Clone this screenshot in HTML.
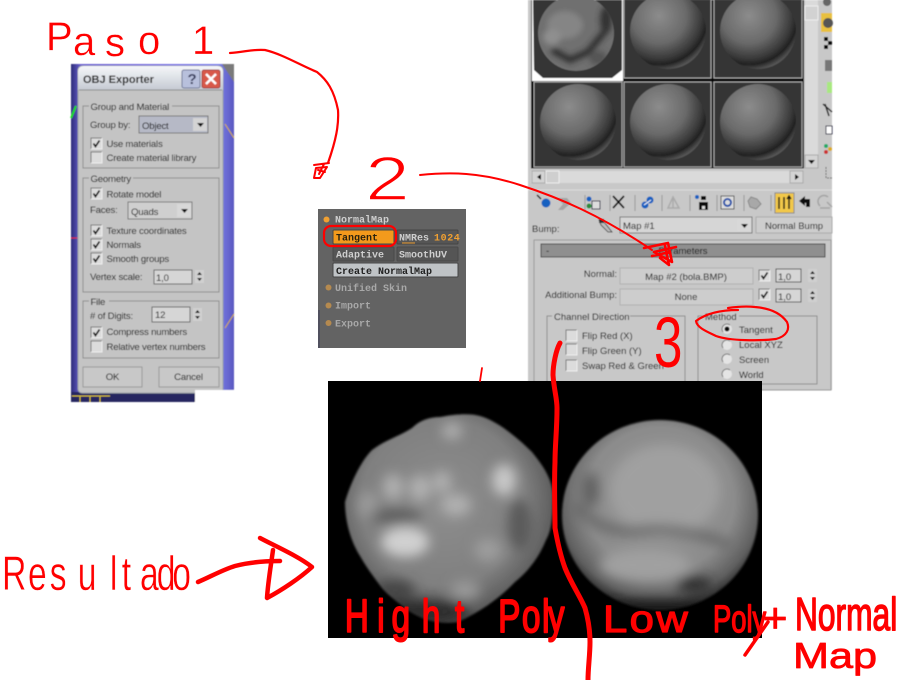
<!DOCTYPE html>
<html><head><meta charset="utf-8"><title>Normal map</title>
<style>
html,body{margin:0;padding:0;background:#fff;width:900px;height:680px;overflow:hidden}
svg{display:block;position:absolute;left:0;top:0}
text{font-family:"Liberation Sans",sans-serif}
.ui text{font-size:9.6px;letter-spacing:-.2px;fill:#000}
.mx text{font-size:9.5px;fill:#000}
.z text{font-family:"Liberation Mono",monospace;font-weight:bold;font-size:10px;fill:#cfcfcf}
.hw{fill:#f00;stroke:#f00;stroke-linejoin:round}
.er{fill:#f00;stroke:#fff;stroke-linejoin:round}
.r{fill:none;stroke:#f00;stroke-linecap:round;stroke-linejoin:round}
</style></head><body>
<svg width="900" height="680" viewBox="0 0 900 680" xmlns="http://www.w3.org/2000/svg">
<defs>
<filter id="b" x="-5%" y="-5%" width="110%" height="110%"><feGaussianBlur stdDeviation="0.4"/></filter>
<filter id="b2" x="-5%" y="-5%" width="110%" height="110%"><feGaussianBlur stdDeviation="0.3"/></filter>
<filter id="bl8" x="-50%" y="-50%" width="200%" height="200%"><feGaussianBlur stdDeviation="6"/></filter>
<filter id="bl4" x="-50%" y="-50%" width="200%" height="200%"><feGaussianBlur stdDeviation="3"/></filter>
<filter id="bl1" x="-10%" y="-10%" width="120%" height="120%"><feGaussianBlur stdDeviation="1"/></filter>
<radialGradient id="s" cx=".38" cy=".3" r=".8"><stop offset="0" stop-color="#8c8c8c"/><stop offset=".45" stop-color="#6a6a6a"/><stop offset=".7" stop-color="#3a3a3a"/><stop offset=".8" stop-color="#222"/><stop offset=".9" stop-color="#555"/><stop offset="1" stop-color="#777"/></radialGradient>
<radialGradient id="ls" cx=".47" cy=".42" r=".62"><stop offset="0" stop-color="#8e8e8e"/><stop offset=".6" stop-color="#808080"/><stop offset=".82" stop-color="#5c5c5c"/><stop offset="1" stop-color="#1c1c1c"/></radialGradient>
<radialGradient id="rs" cx=".5" cy=".42" r=".6"><stop offset="0" stop-color="#979797"/><stop offset=".62" stop-color="#8c8c8c"/><stop offset=".84" stop-color="#606060"/><stop offset="1" stop-color="#111"/></radialGradient>
<linearGradient id="tb" x1="0" x2="0" y1="0" y2="1"><stop offset="0" stop-color="#f6f7fa"/><stop offset="1" stop-color="#c5cad2"/></linearGradient>
<linearGradient id="pg" x1="0" x2="1" y1="0" y2="0"><stop offset="0" stop-color="#2c2c78"/><stop offset=".06" stop-color="#6a5fd0"/><stop offset=".5" stop-color="#7a70e0"/><stop offset=".9" stop-color="#7c80ea"/><stop offset="1" stop-color="#5a58c0"/></linearGradient>
<g id="cb"><rect width="11" height="11" fill="#dcdcdc"/><path d="M0 11V0H11" fill="none" stroke="#777"/><path d="M11 0V11H0" fill="none" stroke="#eee"/></g>
<g id="ck"><use href="#cb"/><path d="M2.5 5.5L4.5 8.5L8.5 2.5" fill="none" stroke="#111" stroke-width="1.7"/></g>
<g id="sp"><rect width="9" height="13" fill="#d0d0d0"/><path d="M4.5 2L7 5H2ZM4.5 11L7 8H2Z" fill="#111"/></g>
<g id="ra"><circle r="5" fill="#e4e4e4"/><path d="M-4 3A5 5 0 0 1 3 -4" fill="none" stroke="#777"/></g>
<clipPath id="lc"><path d="M345 502C350 485 360 462 372 450C385 440 400 436 412 428C420 420 430 417 440 417C455 414 470 413 480 416C495 420 515 435 532 452C545 468 552 480 553 495C553 515 552 530 546 540C540 555 530 570 515 582C500 598 480 612 458 622C440 625 420 620 405 608C395 600 388 595 382 588C372 575 365 565 360 556C350 540 345 520 345 502Z"/></clipPath>
<clipPath id="rc"><ellipse cx="660" cy="515" rx="98" ry="95"/></clipPath>
<clipPath id="c1"><circle cx="576" cy="33" r="38"/></clipPath>
</defs>

<!-- OBJ exporter -->
<g class="ui" filter="url(#b)">
<rect x="71" y="64" width="163" height="338" fill="url(#pg)"/>
<rect x="71" y="392" width="124" height="10" fill="#262660"/>
<path d="M222 64H234V82Z" fill="#7a7a7a"/>
<path d="M71 118L76 106" stroke="#1fe01f" stroke-width="2" fill="none"/>
<path d="M225 124L234 138M225 328L234 314" stroke="#d8b030" fill="none"/>
<path d="M71 238H78" stroke="#e02020"/>
<path d="M72 396H110M90 396V402M80 396V402M100 396V402" stroke="#d8c020" fill="none"/>
<rect x="78" y="66" width="145" height="327" rx="4" fill="#c4c4c4" stroke="#9aa0a8"/>
<rect x="195" y="390" width="40" height="13" fill="#fff"/>
<path d="M78 90V72Q78 66 84 66H217Q223 66 223 72V90Z" fill="url(#tb)"/>
<path d="M79 90H222" stroke="#8a8a8a"/>
<text x="83" y="83" style="font-weight:bold;font-size:11px;letter-spacing:0;fill:#222">OBJ Exporter</text>
<rect x="182" y="70" width="18" height="18" rx="2" fill="#b8c0dc" stroke="#707898"/>
<text x="187.5" y="84" style="font-size:15px;font-weight:bold;fill:#3a3f60">?</text>
<rect x="202" y="70" width="18" height="18" rx="2" fill="#d85848" stroke="#a04040"/>
<path d="M206 74L216 84M216 74L206 84" stroke="#fff" stroke-width="2.4"/>
<g fill="none" stroke="#8e8e8e"><rect x="83" y="106" width="136" height="62"/><rect x="83" y="178" width="136" height="114"/><rect x="83" y="301" width="136" height="57"/></g>
<rect x="89" y="100" width="83" height="12" fill="#c4c4c4"/><rect x="89" y="172" width="44" height="12" fill="#c4c4c4"/><rect x="89" y="295" width="20" height="12" fill="#c4c4c4"/>
<text x="90.5" y="110">Group and Material</text>
<text x="90" y="128">Group by:</text>
<rect x="139" y="116" width="69" height="17" fill="#b6b9c6" stroke="#777"/><rect x="193" y="118" width="14" height="13" fill="#d4d4d4"/><path d="M197 123H204L200.500 127Z" fill="#111"/>
<text x="142" y="129">Object</text>
<use href="#ck" x="91" y="138"/><text x="106.500" y="147">Use materials</text>
<use href="#cb" x="91" y="152"/><text x="106.500" y="161">Create material library</text>
<text x="90.500" y="182">Geometry</text>
<use href="#ck" x="91" y="188"/><text x="106.500" y="197.500">Rotate model</text>
<text x="90" y="213">Faces:</text>
<rect x="128" y="202" width="64" height="17" fill="#cfcfcf" stroke="#777"/><rect x="177" y="204" width="14" height="13" fill="#d8d8d8"/><path d="M181 209H188L184.500 213Z" fill="#111"/>
<text x="131" y="215">Quads</text>
<use href="#ck" x="91" y="225"/><text x="106.500" y="234">Texture coordinates</text>
<use href="#ck" x="91" y="239"/><text x="106.500" y="248">Normals</text>
<use href="#ck" x="91" y="253"/><text x="106.500" y="262">Smooth groups</text>
<text x="90" y="280">Vertex scale:</text>
<rect x="154" y="270" width="38" height="14" fill="#d6d6d6" stroke="#666"/><text x="156" y="281">1,0</text><use href="#sp" x="195" y="270"/>
<text x="90.500" y="305">File</text>
<text x="90" y="319"># of Digits:</text>
<rect x="152" y="307" width="38" height="15" fill="#d6d6d6" stroke="#666"/><text x="155" y="318">12</text><use href="#sp" x="193" y="308"/>
<use href="#ck" x="91" y="327"/><text x="106.500" y="335">Compress numbers</text>
<use href="#cb" x="91" y="341"/><text x="106.500" y="350">Relative vertex numbers</text>
<rect x="83" y="367" width="59" height="20" fill="#c8c8c8" stroke="#999"/><rect x="159" y="367" width="60" height="20" fill="#c8c8c8" stroke="#999"/>
<text x="112.500" y="380" text-anchor="middle">OK</text><text x="188.500" y="380" text-anchor="middle">Cancel</text>
</g>

<!-- ZBrush -->
<g class="z" filter="url(#b2)">
<rect x="318" y="209" width="148" height="139" fill="#636363"/>
<path d="M319 310V348" stroke="#3c3c58"/>
<circle cx="326.500" cy="219.500" r="3" fill="#f0a030"/><text x="335" y="222.500">NormalMap</text>
<rect x="333" y="230" width="61" height="14" rx="1" fill="#f39a1c" stroke="#444"/><text x="336" y="240.500" style="fill:#2b2410">Tangent</text>
<rect x="397" y="230" width="61" height="14" rx="1" fill="#555" stroke="#444"/><text x="399" y="240.500">NMRes</text><text x="434" y="240.500" style="fill:#f0a030;letter-spacing:.6px">1024</text>
<path d="M402 243H415" stroke="#f0a030"/>
<rect x="333" y="247" width="61" height="14" rx="1" fill="#555" stroke="#484848"/><text x="336" y="257.500">Adaptive</text>
<rect x="397" y="247" width="61" height="14" rx="1" fill="#555" stroke="#484848"/><text x="399" y="257.500">SmoothUV</text>
<rect x="333" y="263" width="125" height="14" rx="1" fill="#bfc3c6" stroke="#444"/><text x="336" y="274" style="fill:#222">Create NormalMap</text>
<circle cx="328.500" cy="287.500" r="3" fill="#b58a50"/><text x="335" y="291" style="fill:#a8a8a8">Unified Skin</text>
<circle cx="328.500" cy="305.500" r="3" fill="#b58a50"/><text x="335" y="308.500" style="fill:#a8a8a8">Import</text>
<circle cx="328.500" cy="323" r="3" fill="#b58a50"/><text x="335" y="326.500" style="fill:#a8a8a8">Export</text>
</g>

<!-- 3ds Max material editor -->
<g class="mx" filter="url(#b)">
<rect x="528" y="0" width="304" height="390" fill="#c8c8c8"/>
<rect x="531" y="0" width="273" height="168.500" fill="#000"/>
<rect x="532" y="0" width="91" height="81" fill="#fff"/>
<path d="M533 0H622V70L612 78H543L534 70Z" fill="#343434"/>
<g fill="#343434" stroke="#aaa"><rect x="624" y="-1" width="87" height="79"/><rect x="714" y="-1" width="88" height="79"/><rect x="534" y="82" width="88" height="85"/><rect x="624" y="82" width="87" height="85"/><rect x="714" y="82" width="88" height="85"/></g>
<circle cx="576" cy="33" r="38" fill="#6f6f6f"/>
<g clip-path="url(#c1)"><g filter="url(#bl4)">
<ellipse cx="565" cy="25" rx="18" ry="14" fill="#858585"/><ellipse cx="552" cy="37" rx="9" ry="8" fill="#8f8f8f"/>
<path d="M552 50L570 60L588 52L606 30" stroke="#2c2c2c" stroke-width="6" fill="none"/><ellipse cx="606" cy="20" rx="6" ry="14" fill="#333"/><ellipse cx="598" cy="58" rx="9" ry="7" fill="#555"/></g></g>
<circle cx="668" cy="31" r="38" fill="url(#s)"/>
<circle cx="758" cy="31" r="38" fill="url(#s)"/>
<circle cx="578" cy="122" r="38" fill="url(#s)"/>
<circle cx="668" cy="122" r="38" fill="url(#s)"/>
<circle cx="758" cy="122" r="38" fill="url(#s)"/>
<rect x="805" y="0" width="13" height="168" fill="#dadada"/><rect x="805" y="6" width="13" height="14" fill="#d2d2d2" stroke="#eee"/>
<rect x="805" y="155" width="13" height="13" fill="#d4d4d4" stroke="#aaa"/><path d="M808 160H815L811.500 164Z" fill="#111"/>
<rect x="531" y="171" width="272" height="12" fill="#dadada"/>
<rect x="532" y="171" width="13" height="12" fill="#d4d4d4" stroke="#aaa"/><path d="M541 174V180L537 177Z" fill="#111"/>
<rect x="546" y="171" width="13" height="12" fill="#cfcfcf" stroke="#eee"/>
<rect x="790" y="171" width="13" height="12" fill="#d4d4d4" stroke="#aaa"/><path d="M795 174V180L799 177Z" fill="#111"/>
<!-- right icons -->
<circle cx="827" cy="2" r="4" fill="#666"/>
<rect x="821" y="13" width="11" height="19" fill="#e8c040"/><circle cx="828" cy="23" r="5" fill="#555"/>
<g fill="#111"><rect x="824" y="37" width="4" height="4"/><rect x="828" y="41" width="4" height="4"/><rect x="824" y="45" width="4" height="4"/></g>
<rect x="825" y="60" width="7" height="11" fill="#777"/>
<rect x="827" y="82" width="5" height="11" fill="#a8e880"/>
<path d="M823 104L832 112M825 104L829 116" stroke="#222" fill="none" stroke-width="1.500"/>
<rect x="826" y="126" width="6" height="8" fill="#fff" stroke="#224"/>
<circle cx="826" cy="146" r="2" fill="#2a6"/><circle cx="830" cy="149" r="2" fill="#da2"/><circle cx="826" cy="152" r="2" fill="#c33"/>
<path d="M826 167V178H832" stroke="#666" fill="none" stroke-dasharray="2 1"/>
<!-- toolbar -->
<path d="M528 190H832" stroke="#ddd"/>
<path d="M537 195L541 199" stroke="#111" stroke-width="1.500"/><circle cx="546" cy="203" r="4.500" fill="#1860c0"/>
<path d="M557 198H567L571 203L563 210H558L563 204Z" fill="#a4a4a4"/>
<g stroke="#999"><path d="M585 195V211M610 195V211M635 195V211M662 195V211M690 195V211M717 195V211M744 195V211M771 195V211"/></g>
<circle cx="589" cy="199" r="2.500" fill="#1860c0"/><circle cx="589" cy="206" r="2.500" fill="#2a8a3a"/><rect x="592" y="201" width="8" height="8" fill="#ddd" stroke="#224"/>
<path d="M613 196L624 208M624 196L613 208" stroke="#111" stroke-width="1.800"/>
<circle cx="645" cy="205" r="3.500" fill="#1860c0"/><circle cx="650" cy="200" r="3.500" fill="#1860c0"/><path d="M644 205L651 200" stroke="#fff"/>
<path d="M673 197L668 208H679ZM673 197V208" fill="none" stroke="#aaa" stroke-width="1.500"/>
<circle cx="697" cy="197" r="2" fill="#1860c0"/><rect x="701" y="196" width="5" height="4" fill="#111"/><rect x="699" y="202" width="9" height="8" fill="#111"/><rect x="702" y="206" width="3" height="3" fill="#ddd"/>
<rect x="721" y="196" width="13" height="13" fill="#ddd" stroke="#555"/><circle cx="727.500" cy="202.500" r="3.500" fill="none" stroke="#1c4ea8" stroke-width="2"/>
<path d="M751 197L757 199L761 204L756 209L750 207L748 201Z" fill="#a8a8a8" stroke="#888"/>
<rect x="775" y="193" width="19" height="20" fill="#f2c84a" stroke="#888"/>
<path d="M779 197V209M784 197V209M789 197V209M787 199L789 196L791 199" stroke="#111" stroke-width="1.500" fill="none"/>
<path d="M799 201L805 196V199H810V207H806V203H805V206Z" fill="#111"/>
<path d="M820 206A5 5 0 0 1 828 197M827 202L832 207M820 208H830" stroke="#a4a4a4" stroke-width="1.500" fill="none"/>
<!-- bump row -->
<text x="532" y="232">Bump:</text>
<path d="M599 220L604 222L612 232L608 232L601 225Z" fill="#bbb" stroke="#333" stroke-width=".8"/><rect x="599" y="219" width="5" height="4" fill="#333"/>
<rect x="620" y="217" width="132" height="16" fill="#d6d6d6" stroke="#777"/><rect x="737" y="219" width="14" height="12" fill="#d8d8d8"/><path d="M741 224H748L744.500 228Z" fill="#111"/>
<text x="623" y="229">Map #1</text>
<rect x="756" y="217" width="76" height="16" fill="#cdcdcd" stroke="#aaa"/><text x="794" y="229" text-anchor="middle">Normal Bump</text>
<!-- rollup -->
<rect x="534" y="240" width="297" height="150" fill="none" stroke="#9a9a9a"/>
<rect x="541" y="244" width="284" height="13" fill="#8f8f8f" stroke="#444"/>
<text x="546" y="254">-</text><text x="683" y="254" text-anchor="middle">Parameters</text>
<text x="617" y="277" text-anchor="end">Normal:</text>
<rect x="620" y="268" width="133" height="16" fill="#cdcdcd" stroke="#b0b0b0"/><text x="686" y="280" text-anchor="middle">Map #2 (bola.BMP)</text>
<use href="#ck" x="759" y="270"/><rect x="776" y="269" width="25" height="13" fill="#d6d6d6" stroke="#555"/><text x="778" y="280">1,0</text><use href="#sp" x="808" y="269"/>
<text x="617" y="298" text-anchor="end">Additional Bump:</text>
<rect x="620" y="289" width="133" height="16" fill="#cdcdcd" stroke="#b0b0b0"/><text x="686" y="300" text-anchor="middle">None</text>
<use href="#ck" x="759" y="289"/><rect x="776" y="289" width="25" height="13" fill="#d6d6d6" stroke="#555"/><text x="778" y="300">1,0</text><use href="#sp" x="808" y="289"/>
<g fill="none" stroke="#8e8e8e"><rect x="547" y="316" width="138" height="70"/><rect x="698" y="316" width="119" height="68"/></g>
<rect x="552" y="310" width="78" height="12" fill="#c8c8c8"/><rect x="703" y="310" width="36" height="12" fill="#c8c8c8"/>
<text x="554" y="320">Channel Direction</text><text x="705" y="320">Method</text>
<use href="#cb" x="566" y="330"/><text x="582" y="339">Flip Red (X)</text>
<use href="#cb" x="566" y="344"/><text x="582" y="354">Flip Green (Y)</text>
<use href="#cb" x="566" y="360"/><text x="582" y="369">Swap Red &amp; Green</text>
<use href="#ra" x="727" y="329"/><circle cx="727" cy="329" r="2.500" fill="#111"/><text x="739" y="333">Tangent</text>
<use href="#ra" x="727" y="345"/><text x="739" y="348">Local XYZ</text>
<use href="#ra" x="727" y="359"/><text x="739" y="363">Screen</text>
<use href="#ra" x="727" y="374"/><text x="739" y="378">World</text>
</g>

<!-- render -->
<rect x="328" y="381" width="434" height="257" fill="#000"/>
<g filter="url(#bl1)">
<g clip-path="url(#lc)">
<rect x="340" y="410" width="220" height="220" fill="url(#ls)"/>
<g filter="url(#bl8)" fill="#b0b0b0">
<ellipse cx="393" cy="487" rx="10" ry="13"/><ellipse cx="420" cy="488" rx="11" ry="13"/><ellipse cx="442" cy="482" rx="9" ry="11"/><ellipse cx="456" cy="505" rx="15" ry="11"/>
<ellipse cx="504" cy="480" rx="12" ry="16" fill="#c8c8c8"/><ellipse cx="405" cy="542" rx="24" ry="15" fill="#d0d0d0"/><ellipse cx="452" cy="431" rx="10" ry="8"/>
<ellipse cx="488" cy="550" rx="14" ry="12" fill="#9c9c9c"/><ellipse cx="465" cy="590" rx="15" ry="9" fill="#9a9a9a"/><ellipse cx="368" cy="505" rx="10" ry="14" fill="#9a9a9a"/>
<ellipse cx="396" cy="516" rx="26" ry="8" fill="#606060"/><ellipse cx="520" cy="525" rx="12" ry="26" fill="#5a5a5a"/>
<ellipse cx="420" cy="612" rx="50" ry="12" fill="#2a2a2a"/><ellipse cx="395" cy="590" rx="20" ry="10" fill="#444"/>
</g></g>
<g clip-path="url(#rc)">
<rect x="560" y="418" width="200" height="194" fill="url(#rs)"/>
<g filter="url(#bl8)">
<ellipse cx="665" cy="490" rx="55" ry="45" fill="#a0a0a0"/>
<path d="M575 505Q600 535 640 530T730 545" stroke="#606060" stroke-width="8" fill="none"/>
<ellipse cx="645" cy="565" rx="45" ry="16" fill="#a0a0a0"/><ellipse cx="695" cy="585" rx="18" ry="8" fill="#2a2a2a"/><ellipse cx="590" cy="490" rx="9" ry="18" fill="#606060"/><ellipse cx="660" cy="608" rx="70" ry="8" fill="#1c1c1c"/>
</g></g>
</g>

<!-- red strokes -->
<g filter="url(#b2)">
<path class="r" stroke-width="2.200" d="M230 53C245 52 252 49 265 50C282 54 300 65 317 72C327 80 334 90 338 110C339 125 336 140 328 163"/>
<path class="r" stroke-width="2" d="M314 165L329 163M316 168L327 167L320 178L314 178L316 168M318 170L325 172M319 174L324 164"/>
<path class="r" stroke-width="2" d="M420 175C450 172 480 172 520 185C560 198 600 215 652 250"/>
<path class="r" stroke-width="2.600" d="M644 248L668 243L672 262L654 252L676 247M652 256L670 252M665 246L669 265L660 258"/>
<path class="r" stroke-width="2.200" d="M738 310C725 310 708 312 696 321C697 328 708 332 716 336C730 341 760 341 776 339C787 336 790 329 787 322C780 312 768 308 755 307C745 306 735 307 728 308"/>
<rect class="r" stroke-width="2.200" x="324" y="226" width="72" height="20" rx="7"/>
<path class="r" stroke-width="5" d="M560 343C556 350 553 365 553 375C554 390 557 398 557 408C557 430 555 445 555 462C554 485 555 510 555 528C558 545 561 557 565 568C572 585 580 596 585 608C589 622 590 632 590 642C590 655 588 668 588 680"/>
<path class="r" stroke-width="1.800" d="M482 368L480 381"/>
<path class="r" stroke-width="4.500" d="M198 582C210 577 222 570 235 566C250 562 265 561 280 561"/>
<path class="r" stroke-width="4.500" d="M260 538C275 546 298 556 312 567C300 578 282 590 267 598C268 582 271 565 273 550"/>
<path class="r" stroke-width="3.500" d="M745 655L768 622"/>
</g>
<g filter="url(#b2)">
<text class="er" font-size="40" stroke-width=".3" x="46 73 105 138 170 192" y="50 55 56 54 54 54">Paso 1</text>
<text class="er" font-size="62" stroke-width="1.500" transform="translate(365,200) scale(1.300,1)">2</text>
<text class="hw" font-size="71" style="fill:#f00;stroke:none" transform="translate(654,367) scale(.72,1)">3</text>
<text class="er" font-size="48" stroke-width=".4" transform="scale(.7,1)" x="3 40 71 111 157 174 200 224 246" y="590">Resultado</text>
<text class="hw" font-size="46" stroke-width="2" transform="scale(.72,1)" x="479 524 544 586 632 667 692 725 753 761" y="632">Hight Poly</text>
<text class="hw" font-size="38" stroke-width="1.200" letter-spacing="2" transform="translate(603,632) scale(1.150,1)">Low</text>
<text class="hw" font-size="38" stroke-width="1.500" transform="translate(713,632) scale(.72,1)">Poly</text>
<text class="hw" font-size="42" stroke-width=".8" x="763" y="632">+</text>
<text class="hw" font-size="46" stroke-width="1.500" transform="translate(795,630) scale(.69,1)">Normal</text>
<text class="hw" font-size="36" stroke-width=".8" transform="translate(793,668) scale(1.200,1)">Map</text>
</g>
</svg>
</body></html>
